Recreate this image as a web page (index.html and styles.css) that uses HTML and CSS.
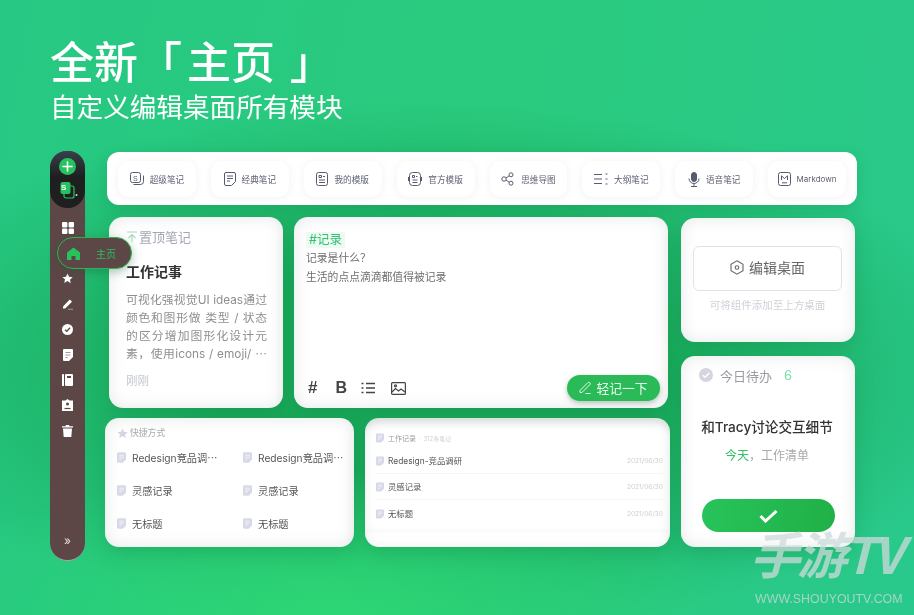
FILE: index.html
```html
<!DOCTYPE html>
<html lang="zh">
<head>
    <title>主页</title>
    <meta charset="utf-8">
    <link rel="stylesheet" href="styles.css">
</head>
<body>
    <svg class="sprites" width="0" height="0">
        <symbol id="doc" viewBox="0 0 14 16"><path d="M2 0h10a2 2 0 0 1 2 2v9l-5 5H2a2 2 0 0 1-2-2V2a2 2 0 0 1 2-2z" fill="currentColor"/><path d="M3.500 4.500h7M3.500 7.500h7M3.500 10.500h3.500" stroke="#fff" stroke-width="1" fill="none"/></symbol>
    </svg>

    <div class="page">
        <header class="hero">
            <h1>全新「 <span class="hero-word">主页</span> 」</h1>
            <p>自定义编辑桌面所有模块</p>
        </header>

        <div class="main">
            <!-- Left rail -->
            <nav class="rail">
                <div class="rail-top">
                    <span class="add-btn">
                        <svg width="11" height="11" viewBox="0 0 11 11"><path d="M5.500 1v9M1 5.500h9" stroke="#fff" stroke-width="1.600" stroke-linecap="round"/></svg>
                    </span>
                    <svg class="space-icon" width="18" height="20" viewBox="0 0 18 20">
                        <rect x="4" y="5" width="10" height="12" rx="2" fill="none" stroke="#26c25f" stroke-width="1.200"/>
                        <rect x="0.500" y="1" width="10" height="12" rx="2" fill="#26c25f"/>
                        <circle cx="16.500" cy="14" r="1" fill="#ddd"/>
                    </svg>
                    <span class="space-letter">S</span>
                </div>
                <div class="rail-item">
                    <svg width="12" height="12" viewBox="0 0 12 12" fill="#fff"><rect width="5.400" height="5.400" rx="1"/><rect x="6.600" width="5.400" height="5.400" rx="1"/><rect y="6.600" width="5.400" height="5.400" rx="1"/><rect x="6.600" y="6.600" width="5.400" height="5.400" rx="1"/></svg>
                </div>
                <div class="rail-item rail-item-home">
                    <div class="home-pill">
                        <svg width="13" height="13" viewBox="0 0 13 13"><path d="M6.500.5 13 5.500V13H8.500V9h-4v4H0V5.500z" fill="#27c25c"/></svg>
                        <span>主页</span>
                    </div>
                </div>
                <div class="rail-item">
                    <svg width="11" height="11" viewBox="0 0 24 24" fill="#fff"><path d="M12 1l3.400 7.300 7.900 1-5.800 5.400 1.500 7.900L12 17.700l-7 3.900 1.500-7.900L.7 9.300l7.900-1z"/></svg>
                </div>
                <div class="rail-item">
                    <svg width="12" height="12" viewBox="0 0 12 12"><path d="M1 8.500 7.800 1.500 10 3.700 3.200 10.500H1z" fill="#fff"/><path d="M6 11.300h5" stroke="#b9adad" stroke-width=".8"/></svg>
                </div>
                <div class="rail-item">
                    <svg width="11" height="11" viewBox="0 0 11 11"><circle cx="5.500" cy="5.500" r="5.500" fill="#fff"/><path d="M3 5.800l1.800 1.500L8 3.800" stroke="#5d4646" stroke-width="1.300" fill="none"/></svg>
                </div>
                <div class="rail-item">
                    <svg width="10" height="12" viewBox="0 0 10 12"><path d="M1 0h8a1 1 0 0 1 1 1v7l-4 4H1a1 1 0 0 1-1-1V1a1 1 0 0 1 1-1z" fill="#fff"/><path d="M2.500 3.500h5M2.500 6h5M2.500 8.500h2" stroke="#8d7d7d" stroke-width=".8"/></svg>
                </div>
                <div class="rail-item">
                    <svg width="11" height="12" viewBox="0 0 11 12"><rect width="2" height="12" rx=".6" fill="#fff"/><rect x="3" width="8" height="12" rx="1" fill="#fff"/><rect x="5" y="2" width="4" height="2" fill="#5d4646"/></svg>
                </div>
                <div class="rail-item">
                    <svg width="11" height="12" viewBox="0 0 11 12"><path d="M3.500 1.500 5.500 0l2 1.500H11V12H0V1.500z" fill="#fff"/><circle cx="5.500" cy="5" r="1.500" fill="#5d4646"/><path d="M2.500 9.500h6" stroke="#5d4646" stroke-width="1.200"/></svg>
                </div>
                <div class="rail-item">
                    <svg width="11" height="12" viewBox="0 0 11 12" fill="#fff"><path d="M4 0h3l.5 1.200H11v1.300H0V1.200h3.500z"/><path d="M1 3.500h9L9.300 12H1.700z"/></svg>
                </div>
                <div class="rail-more">»</div>
            </nav>

            <div class="content">
                <div class="toolbar">
                    <div class="tool">
                        <svg width="14" height="14" viewBox="0 0 14 14" fill="none" stroke="#575b70"><rect x=".5" y=".5" width="10" height="10" rx="2"/><path d="M3.500 12.500h7a3 3 0 0 0 3-3v-6"/><text x="3" y="8.500" font-size="7" fill="#575b70" stroke="none" font-family="Liberation Sans">S</text></svg>
                        <span>超级笔记</span>
                    </div>
                    <div class="tool">
                        <svg width="12" height="14" viewBox="0 0 12 14" fill="none" stroke="#575b70"><path d="M2 .5h8A1.500 1.500 0 0 1 11.500 2v7.500l-4 4H2A1.500 1.500 0 0 1 .5 12V2A1.500 1.500 0 0 1 2 .5zM3 4h6M3 6.500h6M3 9h3"/></svg>
                        <span>经典笔记</span>
                    </div>
                    <div class="tool">
                        <svg width="12" height="14" viewBox="0 0 12 14" fill="none" stroke="#575b70"><rect x=".5" y=".5" width="11" height="13" rx="2"/><path d="M3 3.500h2.500v2H3zM3 8h6M3 10.500h6M7 4.500h2"/></svg>
                        <span>我的模版</span>
                    </div>
                    <div class="tool">
                        <svg width="14" height="14" viewBox="0 0 14 14" fill="none" stroke="#575b70"><rect x="1.500" y=".5" width="11" height="13" rx="3"/><path d="M4.500 3.500h2v2h-2zM4.500 8h5M4.500 10.500h5M8 4.500h1.500M.5 5v4M13.500 5v4"/></svg>
                        <span>官方模版</span>
                    </div>
                    <div class="tool">
                        <svg width="14" height="14" viewBox="0 0 14 14" fill="none" stroke="#575b70"><circle cx="3" cy="7" r="2.200"/><circle cx="10" cy="2.800" r="2"/><circle cx="10" cy="11.200" r="2"/><path d="M5 6 8.200 3.800M5 8l3.200 2.200"/></svg>
                        <span>思维导图</span>
                    </div>
                    <div class="tool">
                        <svg width="14" height="12" viewBox="0 0 14 12" fill="none" stroke="#575b70"><path d="M0 1.500h8M0 6h8M0 10.500h8M11.500 1h2M11.500 6h2M11.500 11h2" stroke-width="1.100"/></svg>
                        <span>大纲笔记</span>
                    </div>
                    <div class="tool">
                        <svg width="12" height="15" viewBox="0 0 12 15" fill="none" stroke="#575b70"><rect x="3.500" y=".5" width="5" height="9" rx="2.500" fill="#575b70"/><path d="M1 6.500a5 5 0 0 0 10 0M6 11.500v3M3 14.500h6"/></svg>
                        <span>语音笔记</span>
                    </div>
                    <div class="tool">
                        <svg width="13" height="14" viewBox="0 0 13 14" fill="none" stroke="#575b70"><rect x=".5" y=".5" width="12" height="13" rx="2"/><path d="M3.500 8V3.800L6.500 6.500l3-2.700V8M4 10.800h5"/></svg>
                        <span class="tool-en">Markdown</span>
                    </div>
                </div>

                <div class="board">
                    <div class="board-left">
                        <div class="row-top">
                            <!-- Pinned note -->
                            <section class="card pin-card">
                                <div class="pin-head">
                                    <svg width="12" height="12" viewBox="0 0 12 12" fill="none" stroke="#9fdcbb" stroke-width="1.100"><path d="M1 1h10M6 11V4M2.500 7 6 3.500 9.500 7"/></svg>
                                    <span>置顶笔记</span>
                                </div>
                                <h2>工作记事</h2>
                                <div class="pin-body">
                                    <div class="pin-line">可视化强视觉UI ideas通过</div>
                                    <div class="pin-line">颜色和图形做 类型 / 状态</div>
                                    <div class="pin-line">的区分增加图形化设计元</div>
                                    <div class="pin-line">素，使用icons / emoji/ ⋯</div>
                                </div>
                                <div class="pin-time">刚刚</div>
                            </section>

                            <!-- Quick note -->
                            <section class="card note-card">
                                <span class="tag">#记录</span>
                                <p class="note-text">记录是什么？</p>
                                <p class="note-text">生活的点点滴滴都值得被记录</p>
                                <div class="note-foot">
                                    <div class="note-tools">
                                        <span class="note-tool note-hash">#</span>
                                        <span class="note-tool note-bold">B</span>
                                        <svg width="14" height="12" viewBox="0 0 14 12" fill="none" stroke="#444" stroke-width="1.300"><path d="M5 1.500h9M5 6h9M5 10.500h9M.5 1.500h2M.5 6h2M.5 10.500h2"/></svg>
                                        <svg width="15" height="13" viewBox="0 0 15 13" fill="none" stroke="#444" stroke-width="1.200"><rect x=".6" y=".6" width="13.800" height="11.800" rx="1"/><path d="M1 10l3.500-3.500 3 2.500 2.500-2 4 3"/><circle cx="4.500" cy="3.800" r="1"/></svg>
                                    </div>
                                    <button class="write-btn">
                                        <svg width="13" height="13" viewBox="0 0 13 13" fill="none" stroke="#e8f8ee"><path d="M1 9.500 8.800 1.700a1.400 1.400 0 0 1 2 2L3 11.500H1zM6.500 12.500h5"/></svg>
                                        轻记一下
                                    </button>
                                </div>
                            </section>
                        </div>

                        <div class="row-bottom">
                            <!-- Shortcuts -->
                            <section class="card short-card">
                                <div class="short-head">
                                    <svg width="11" height="11" viewBox="0 0 24 24" fill="#d5d6e4"><path d="M12 1l3.400 7.300 7.900 1-5.800 5.400 1.500 7.900L12 17.700l-7 3.900 1.500-7.900L.7 9.300l7.900-1z"/></svg>
                                    <span>快捷方式</span>
                                </div>
                                <div class="short-grid">
                                    <div class="short-item"><svg width="9" height="11"><use href="#doc"/></svg><span>Redesign竞品调⋯</span></div>
                                    <div class="short-item"><svg width="9" height="11"><use href="#doc"/></svg><span>Redesign竞品调⋯</span></div>
                                    <div class="short-item"><svg width="9" height="11"><use href="#doc"/></svg><span>灵感记录</span></div>
                                    <div class="short-item"><svg width="9" height="11"><use href="#doc"/></svg><span>灵感记录</span></div>
                                    <div class="short-item"><svg width="9" height="11"><use href="#doc"/></svg><span>无标题</span></div>
                                    <div class="short-item"><svg width="9" height="11"><use href="#doc"/></svg><span>无标题</span></div>
                                </div>
                            </section>

                            <!-- Notebook list -->
                            <section class="card list-card">
                                <div class="list-head">
                                    <svg width="8" height="10"><use href="#doc"/></svg>
                                    <span class="list-name">工作记录</span>
                                    <span class="list-count">· 312条笔记</span>
                                </div>
                                <div class="list-row"><svg width="8" height="10"><use href="#doc"/></svg><span class="list-title">Redesign-竞品调研</span><span class="list-date">2021/06/30</span></div>
                                <div class="list-row"><svg width="8" height="10"><use href="#doc"/></svg><span class="list-title">灵感记录</span><span class="list-date">2021/06/30</span></div>
                                <div class="list-row list-row-last"><svg width="8" height="10"><use href="#doc"/></svg><span class="list-title">无标题</span><span class="list-date">2021/06/30</span></div>
                                <div class="list-edge"></div>
                            </section>
                        </div>
                    </div>

                    <div class="board-right">
                        <!-- Edit desktop -->
                        <section class="card edit-card">
                            <div class="edit-btn">
                                <svg width="14" height="15" viewBox="0 0 14 15" fill="none" stroke="#666" stroke-width="1.100"><path d="M7 .8l6 3.400v6.600l-6 3.400-6-3.400V4.200z"/><circle cx="7" cy="7.500" r="1.800"/></svg>
                                <span>编辑桌面</span>
                            </div>
                            <p class="edit-hint">可将组件添加至上方桌面</p>
                        </section>

                        <!-- Todo -->
                        <section class="card todo-card">
                            <div class="todo-head">
                                <svg width="14" height="14" viewBox="0 0 14 14"><circle cx="7" cy="7" r="7" fill="#d4d5e1"/><path d="M3.800 7.200l2.300 2.100 4.200-4.300" stroke="#fff" stroke-width="1.500" fill="none"/></svg>
                                <span class="todo-label">今日待办</span>
                                <span class="todo-count">6</span>
                            </div>
                            <div class="todo-title">和Tracy讨论交互细节</div>
                            <div class="todo-sub"><span class="todo-today">今天</span>，工作清单</div>
                            <div class="todo-btn">
                                <svg width="19" height="14" viewBox="0 0 19 14" fill="none" stroke="#fff" stroke-width="3"><path d="M1.500 7l5 5L17.500 2"/></svg>
                            </div>
                        </section>
                    </div>
                </div>
            </div>
        </div>

        <!-- Watermark over the page -->
        <div class="watermark">
            <div class="mark-logo">手游TV</div>
            <div class="mark-url">WWW.SHOUYOUTV.COM</div>
        </div>
    </div>
</body>
</html>
```

FILE: styles.css
```css
* {
    box-sizing: border-box;
}
html, body {
    margin: 0;
    height: 100%;
    overflow: hidden;
    background: #2acb85;
}
body {
    font-family: Inter, "Noto Sans CJK SC", sans-serif;
    color: #555;
}
p, h1, h2 {
    margin: 0;
    font-weight: normal;
}
.sprites {
    position: absolute;
}
/* Green backdrop */
.page {
    position: relative;
    width: 914px;
    height: 615px;
    padding-top: 34px;
    color: #555;
    background:
        radial-gradient(ellipse 420px 150px at 330px 615px, #2dd674 0, rgba(45, 214, 116, 0) 100%),
        radial-gradient(ellipse 560px 270px at 430px 370px, #19aa5b 0, #19aa5b 40%, rgba(25, 170, 91, 0) 100%),
        linear-gradient(100deg, #26c883, #2acb7e 50%, #29c88c);
    filter: blur(.5px);
}
.hero {
    height: 117px;
    padding-left: 50px;
    color: #fff;
    font-family: "Noto Sans CJK SC", sans-serif;
}
.hero h1 {
    font-size: 44px;
    line-height: 52px;
    font-weight: 500;
}
.hero-word {
    margin: 0 5px 0 -5px;
}
.hero p {
    font-size: 26.6px;
    line-height: 34px;
    margin-top: 3px;
}
.main {
    display: flex;
    margin-left: 50px;
    gap: 20px;
}
/* Left rail */
.rail {
    position: relative;
    display: flex;
    flex-direction: column;
    align-items: center;
    width: 35px;
    height: 410px;
    border-radius: 17px 17px 18px 18px;
    background: #5d4646;
    border-bottom: 1px solid #a9a3a0;
}
.rail-top {
    position: relative;
    width: 35px;
    height: 57px;
    margin-bottom: 7px;
    padding-top: 7px;
    border-radius: 17px;
    background: linear-gradient(#38404c, #1f1f20 45%);
    display: flex;
    flex-direction: column;
    align-items: center;
    flex-shrink: 0;
}
.add-btn {
    display: flex;
    align-items: center;
    justify-content: center;
    width: 17px;
    height: 17px;
    border-radius: 50%;
    background: #26c25f;
}
.space-icon {
    margin-top: 6px;
    margin-left: 3px;
}
.space-letter {
    position: absolute;
    left: 11px;
    top: 32px;
    font: bold 8px "Liberation Sans", sans-serif;
    color: #fff;
}
.rail-item {
    display: flex;
    align-items: center;
    justify-content: center;
    width: 100%;
    height: 25.400px;
    flex-shrink: 0;
}
.rail-item-home {
    position: relative;
}
.home-pill {
    position: absolute;
    left: 7px;
    top: -3px;
    z-index: 2;
    display: flex;
    align-items: center;
    width: 75px;
    height: 32px;
    padding-left: 9px;
    border: 1.500px solid #2bb54e;
    border-radius: 16px;
    background: #5d4646;
    box-shadow: 0 3px 10px rgba(30, 90, 60, .35);
    color: #27c25c;
    font-size: 10px;
}
.home-pill span {
    margin-left: 16px;
}
.rail-more {
    margin-top: auto;
    padding-bottom: 10px;
    color: #e6dfdf;
    font-size: 12px;
    line-height: 18px;
}
/* Cards */
.content {
    width: 765px;
    padding-top: 1px;
}
.card {
    background: #fff;
    border-radius: 14px;
    box-shadow:
        0 6px 18px rgba(20, 130, 70, .3),
        inset 0 0 16px rgba(110, 130, 120, .18);
}
.toolbar {
    display: flex;
    gap: 15px;
    width: 750px;
    height: 53px;
    margin-left: 2px;
    padding: 9px 11px;
    border-radius: 12px;
    background: #fff;
    box-shadow: 0 4px 14px rgba(20, 130, 70, .25);
}
.tool {
    display: flex;
    align-items: center;
    justify-content: center;
    gap: 6px;
    width: 78px;
    height: 36px;
    border-radius: 11px;
    background: #fff;
    box-shadow: 0 1px 8px rgba(90, 90, 110, .08);
    font-size: 8.600px;
    color: #5c5f72;
}
.tool-en {
    font-size: 8px;
}
.board {
    display: flex;
    margin-top: 12px;
}
.board-left {
    width: 565px;
}
.row-top {
    display: flex;
    gap: 11px;
    height: 191px;
    margin: 0 2px 0 4px;
}
.row-bottom {
    display: flex;
    gap: 11px;
    height: 129px;
    margin-top: 10px;
}
.board-right {
    width: 174px;
    margin-left: 11px;
    padding-top: 1px;
}
/* Pinned note */
.pin-card {
    width: 174px;
    padding: 11px 16px 0 17px;
}
.pin-head {
    display: flex;
    align-items: center;
    gap: 1px;
    font-size: 13px;
    line-height: 18px;
    color: #a4a7b3;
}
.pin-card h2 {
    margin-top: 16px;
    font-size: 14px;
    line-height: 20px;
    font-weight: bold;
    color: #333;
}
.pin-body {
    margin-top: 9px;
    font-size: 11.800px;
    line-height: 18px;
    color: #8f8f8f;
}
.pin-line {
    text-align: justify;
    text-align-last: justify;
    white-space: nowrap;
}
.pin-time {
    margin-top: 9px;
    font-size: 11.500px;
    line-height: 18px;
    color: #c5c7d2;
}
/* Quick note */
.note-card {
    display: flex;
    flex-direction: column;
    align-items: flex-start;
    width: 374px;
    padding: 15px 8px 7px 12px;
}
.tag {
    padding: 0 3px;
    background: #ecfaf2;
    color: #35bf72;
    font-size: 12.500px;
    line-height: 16px;
}
.note-text {
    margin-top: 3px;
    font-size: 10.800px;
    line-height: 16px;
    color: #6e6e6e;
}
.note-foot {
    display: flex;
    justify-content: space-between;
    align-items: center;
    width: 100%;
    margin-top: auto;
}
.note-tools {
    display: flex;
    align-items: center;
    gap: 16px;
    padding-left: 2px;
}
.note-tool {
    font: bold 16px "Liberation Sans", sans-serif;
    color: #444;
    line-height: 16px;
}
.note-hash {
    font-size: 17px;
}
.note-bold {
    margin: 0 -2px 0 2px;
}
.write-btn {
    display: flex;
    align-items: center;
    justify-content: center;
    gap: 4px;
    width: 93px;
    height: 26px;
    padding: 0 0 2px;
    border: 0;
    border-radius: 13px;
    background: #2abb58;
    box-shadow: 0 2px 5px rgba(40, 90, 60, .35);
    color: #e8f8ee;
    font-family: inherit;
    font-size: 12.800px;
}
/* Shortcuts */
.short-card {
    width: 249px;
    padding: 8px 10px 0 12px;
}
.short-head {
    display: flex;
    align-items: center;
    gap: 2px;
    font-size: 8.800px;
    line-height: 14px;
    color: #a9a9ae;
}
.short-grid {
    display: grid;
    grid-template-columns: 126px 1fr;
    grid-auto-rows: 33px;
    margin-top: 1px;
}
.short-item {
    display: flex;
    align-items: center;
    gap: 6px;
    font-size: 10.200px;
    white-space: nowrap;
    color: #d8d9e8;
}
.short-item span {
    color: #555;
}
/* Notebook list */
.list-card {
    width: 305px;
    padding: 14px 7px 0 11px;
    color: #d8d9e8;
    box-shadow:
        0 6px 18px rgba(20, 130, 70, .3),
        inset 0 12px 10px -8px rgba(110, 130, 120, .25),
        inset 0 0 12px rgba(110, 130, 120, .12);
}
.list-head {
    display: flex;
    align-items: center;
    gap: 4px;
    height: 12px;
}
.list-name {
    font-size: 7px;
    color: #9b9ba3;
}
.list-count {
    font-size: 6px;
    color: #cfd0d8;
}
.list-row {
    display: flex;
    align-items: center;
    gap: 4px;
    height: 26.500px;
    border-bottom: 1px solid #f5f5f7;
}
.list-row svg, .list-date {
    margin-top: 2px;
}
.list-head + .list-row {
    margin-top: 3px;
}
.list-row-last {
    border-bottom: 0;
}
.list-title {
    font-size: 8.400px;
    color: #555;
}
.list-date {
    margin-left: auto;
    font-size: 6.600px;
    color: #cfcfd3;
}
.list-edge {
    height: 1px;
    margin: 6px -7px 0 -11px;
    box-shadow: 0 -2px 5px rgba(110, 130, 120, .18);
}
/* Edit desktop */
.edit-card {
    height: 124px;
    padding: 28px 13px 0 12px;
}
.edit-btn {
    display: flex;
    align-items: center;
    justify-content: center;
    gap: 5px;
    height: 45px;
    padding-bottom: 3px;
    border: 1px solid #e3e3e7;
    border-radius: 6px;
    font-size: 14px;
    color: #666;
}
.edit-hint {
    margin-top: 7px;
    text-align: center;
    font-size: 10.500px;
    line-height: 16px;
    color: #d0d1d9;
}
/* Todo */
.todo-card {
    height: 191px;
    margin-top: 14px;
    padding: 10px 20px 0 18px;
}
.todo-head {
    display: flex;
    align-items: center;
    height: 18px;
}
.todo-label {
    margin-left: 7px;
    font-size: 13px;
    color: #9b9ca3;
}
.todo-count {
    margin-left: 12px;
    font-size: 13px;
    color: #7bdfa8;
}
.todo-title {
    margin-top: 33px;
    text-align: center;
    font-size: 13.600px;
    line-height: 20px;
    font-weight: 500;
    color: #333;
    white-space: nowrap;
}
.todo-sub {
    margin-top: 10px;
    text-align: center;
    font-size: 12px;
    line-height: 18px;
    color: #a9a9ad;
}
.todo-today {
    color: #32c265;
}
.todo-btn {
    display: flex;
    align-items: center;
    justify-content: center;
    width: 133px;
    height: 33px;
    margin: 34px 0 0 3px;
    border-radius: 17px;
    background: linear-gradient(100deg, #27c45b, #20b047);
}
/* Watermark */
.watermark {
    position: absolute;
    left: 750px;
    top: 521px;
    width: 158px;
    color: rgba(205, 218, 218, .75);
}
.mark-logo {
    font-family: "Noto Sans CJK SC", sans-serif;
    font-size: 50px;
    line-height: 62px;
    font-weight: bold;
    font-style: italic;
    letter-spacing: -3px;
    white-space: nowrap;
}
.mark-url {
    margin: 8px 0 0 5px;
    font-family: "Liberation Sans", sans-serif;
    font-size: 12.400px;
    line-height: 16px;
    white-space: nowrap;
}
```
